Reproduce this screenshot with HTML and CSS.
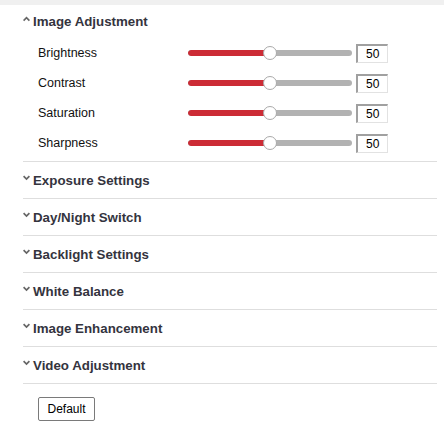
FILE: index.html
```html
<!DOCTYPE html>
<html>
<head>
<meta charset="utf-8">
<link rel="stylesheet" href="styles.css">
</head>
<body>
<div class="topbar"></div>
<div class="panel">
  <section class="section open">
    <div class="sec-head first">
      <svg class="caret" viewBox="0 0 7 10" width="7" height="10"><path d="M0.6 4.6 L3.5 1.7 L6.4 4.6" /></svg>
      <span>Image Adjustment</span>
    </div>
    <div class="rows">
      <div class="row">
        <span class="label">Brightness</span>
        <div class="slider"><div class="track"><div class="fill" style="width:50%"></div></div><div class="thumb" style="left:50%"></div></div>
        <input class="num" type="text" value="50">
      </div>
      <div class="row">
        <span class="label">Contrast</span>
        <div class="slider"><div class="track"><div class="fill" style="width:50%"></div></div><div class="thumb" style="left:50%"></div></div>
        <input class="num" type="text" value="50">
      </div>
      <div class="row">
        <span class="label">Saturation</span>
        <div class="slider"><div class="track"><div class="fill" style="width:50%"></div></div><div class="thumb" style="left:50%"></div></div>
        <input class="num" type="text" value="50">
      </div>
      <div class="row">
        <span class="label">Sharpness</span>
        <div class="slider"><div class="track"><div class="fill" style="width:50%"></div></div><div class="thumb" style="left:50%"></div></div>
        <input class="num" type="text" value="50">
      </div>
    </div>
  </section>
  <section class="section">
    <div class="sec-head"><svg class="caret" viewBox="0 0 7 10" width="7" height="10"><path d="M0.6 1.2 L3.5 4.1 L6.4 1.2" /></svg><span>Exposure Settings</span></div>
  </section>
  <section class="section">
    <div class="sec-head"><svg class="caret" viewBox="0 0 7 10" width="7" height="10"><path d="M0.6 1.2 L3.5 4.1 L6.4 1.2" /></svg><span>Day/Night Switch</span></div>
  </section>
  <section class="section">
    <div class="sec-head"><svg class="caret" viewBox="0 0 7 10" width="7" height="10"><path d="M0.6 1.2 L3.5 4.1 L6.4 1.2" /></svg><span>Backlight Settings</span></div>
  </section>
  <section class="section">
    <div class="sec-head"><svg class="caret" viewBox="0 0 7 10" width="7" height="10"><path d="M0.6 1.2 L3.5 4.1 L6.4 1.2" /></svg><span>White Balance</span></div>
  </section>
  <section class="section">
    <div class="sec-head"><svg class="caret" viewBox="0 0 7 10" width="7" height="10"><path d="M0.6 1.2 L3.5 4.1 L6.4 1.2" /></svg><span>Image Enhancement</span></div>
  </section>
  <section class="section">
    <div class="sec-head"><svg class="caret" viewBox="0 0 7 10" width="7" height="10"><path d="M0.6 1.2 L3.5 4.1 L6.4 1.2" /></svg><span>Video Adjustment</span></div>
  </section>
</div>
<div class="actions">
  <button class="btn" type="button">Default</button>
</div>
</body>
</html>
```

FILE: styles.css
```css
html, body {
  margin: 0;
  padding: 0;
  background: #ffffff;
  font-family: "Liberation Sans", Arial, sans-serif;
}

.topbar {
  height: 5px;
  background: #f0f0f0;
}

.panel {
  margin-left: 23px;
  width: 414px;
}

.section {
  border-bottom: 1px solid #dedede;
}

.sec-head {
  display: flex;
  align-items: center;
  height: 36px;
  font-size: 13.3px;
  font-weight: bold;
  color: #34343e;
}

.sec-head.first {
  height: 32px;
}

.caret {
  display: block;
  width: 7px;
  height: 10px;
  margin-right: 3px;
}

.caret path {
  fill: none;
  stroke: #666;
  stroke-width: 1.7;
}

.rows {
  padding: 1px 0 3px 15px;
}

.row {
  display: flex;
  align-items: center;
  height: 30px;
}

.label {
  width: 150px;
  font-size: 12.5px;
  color: #111;
}

.slider {
  position: relative;
  width: 164px;
  height: 14px;
  display: flex;
  align-items: center;
}

.track {
  width: 100%;
  height: 6px;
  border-radius: 3px;
  background: #b2b2b2;
  overflow: hidden;
}

.fill {
  height: 100%;
  background: #cc2b35;
  border-radius: 3px 0 0 3px;
}

.thumb {
  position: absolute;
  top: 0;
  width: 12px;
  height: 12px;
  margin-left: -7px;
  border: 1px solid #a9a9a9;
  border-radius: 50%;
  background: #ffffff;
}

.num {
  box-sizing: border-box;
  margin: 0 0 0 4px;
  width: 32px;
  height: 19px;
  padding: 0 0 0 8px;
  font-family: "Liberation Sans", Arial, sans-serif;
  font-size: 12px;
  color: #000;
  border-style: solid;
  border-width: 2px 1px 1px 2px;
  border-color: #a0a0a0 #e2e2e2 #e2e2e2 #a0a0a0;
  background: #fff;
  outline: none;
}

.actions {
  padding: 13px 0 0 38px;
}

.btn {
  box-sizing: border-box;
  width: 57px;
  height: 24px;
  padding: 0;
  font-family: "Liberation Sans", Arial, sans-serif;
  font-size: 12px;
  color: #000;
  background: #ffffff;
  border: 1px solid #7a7a7a;
  border-radius: 2px;
}
```
